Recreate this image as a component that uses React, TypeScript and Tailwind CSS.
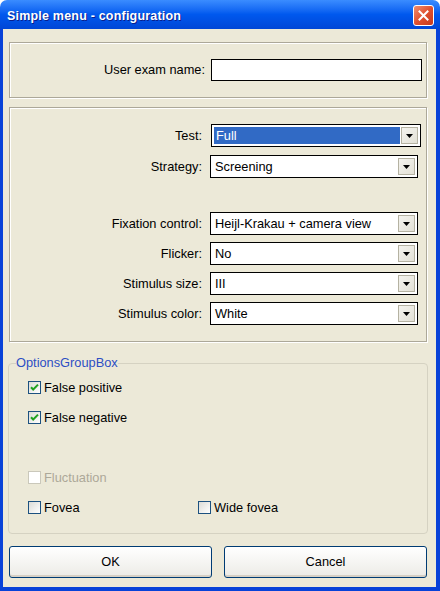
import React from "react";

const font = { fontFamily: '"Liberation Sans", Arial, sans-serif' };

function Combo({ value, selected, wide }: { value: string; selected?: boolean; wide?: boolean }) {
  return (
    <div
      className={`flex h-[23px] items-stretch border border-black bg-white p-[2px] ${
        wide ? "w-[210px]" : "w-[208px]"
      }`}
    >
      <div
        className={`flex flex-1 items-center pl-[2px] pt-[2px] text-[12.8px] leading-none ${
          selected ? "bg-[#316AC5] text-white" : "text-black"
        }`}
      >
        {value}
      </div>
      <div className="ml-[1px] flex w-[17px] items-center justify-center border border-[#B5B2A2] bg-gradient-to-br from-[#F4F3EE] to-[#E3E1D6]">
        <svg width="7" height="4" viewBox="0 0 7 4">
          <path d="M0 0h7L3.5 4z" fill="#000" />
        </svg>
      </div>
    </div>
  );
}

function ComboRow({
  label,
  value,
  selected,
  wide,
  className = "",
}: {
  label: string;
  value: string;
  selected?: boolean;
  wide?: boolean;
  className?: string;
}) {
  return (
    <div className={`flex items-center ${className}`}>
      <div className="w-[194px] pr-[2px] text-right text-[12.8px] text-black">{label}</div>
      <div className={wide ? "ml-[7px]" : "ml-[6px]"}>
        <Combo value={value} selected={selected} wide={wide} />
      </div>
    </div>
  );
}

function Check({
  label,
  checked,
  disabled,
}: {
  label: string;
  checked?: boolean;
  disabled?: boolean;
}) {
  return (
    <div className="flex h-[13px] items-center">
      <div
        className={`flex h-[13px] w-[13px] items-center justify-center border ${
          disabled
            ? "border-[#CAC8BB] bg-white"
            : "border-[#1C5180] bg-gradient-to-br from-[#DCDCD7] to-white"
        }`}
      >
        {checked && (
          <svg width="9" height="9" viewBox="0 0 9 9">
            <path d="M1 4.2l2.2 2.3L8 1.6" stroke="#21A121" strokeWidth="2" fill="none" />
          </svg>
        )}
      </div>
      <span className={`ml-[3px] text-[12.8px] ${disabled ? "text-[#ACA899]" : "text-black"}`}>
        {label}
      </span>
    </div>
  );
}

export default function App() {
  return (
    <div className="flex h-[591px] w-[440px] flex-col bg-white" style={font}>
      {/* Title bar */}
      <div className="flex h-[29px] items-center justify-between rounded-t-[7px] bg-gradient-to-b from-[#3A8CFF] via-[#0058EE] to-[#0046D6] pl-[7px] pr-[6px]">
        <span className="pt-[3px] text-[12.5px] font-bold tracking-[0.2px] text-white [text-shadow:1px_1px_0_#0A1E8C]">
          Simple menu - configuration
        </span>
        <div className="mt-[2px] flex h-[21px] w-[21px] items-center justify-center rounded-[3px] border border-white bg-gradient-to-br from-[#F08D6E] via-[#E0502F] to-[#C5391C]">
          <svg width="11" height="11" viewBox="0 0 11 11">
            <path d="M1.5 1.5l8 8M9.5 1.5l-8 8" stroke="#fff" strokeWidth="2" strokeLinecap="square" />
          </svg>
        </div>
      </div>

      {/* Client area */}
      <div className="flex flex-1 flex-col border-b-[4px] border-l-[3px] border-r-[4px] border-[#0842D8] bg-[#ECE9D8] pl-[6px] pr-[9px] pt-[13px]">
        {/* Exam name panel */}
        <div className="flex h-[56px] items-center border border-[#ACA899] shadow-[1px_1px_0_#fff,inset_1px_1px_0_#fff]">
          <div className="w-[197px] pr-[2px] text-right text-[12.8px] text-black">User exam name:</div>
          <input
            className="ml-[4px] h-[22px] w-[211px] border border-black bg-white outline-none"
            defaultValue=""
          />
        </div>

        {/* Settings panel */}
        <div className="mt-[9px] flex h-[235px] flex-col border border-[#ACA899] pt-[16px] shadow-[1px_1px_0_#fff,inset_1px_1px_0_#fff]">
          <ComboRow label="Test:" value="Full" selected wide />
          <ComboRow label="Strategy:" value="Screening" className="mt-[8px]" />
          <ComboRow label="Fixation control:" value="Heijl-Krakau + camera view" className="mt-[34px]" />
          <ComboRow label="Flicker:" value="No" className="mt-[7px]" />
          <ComboRow label="Stimulus size:" value="III" className="mt-[7px]" />
          <ComboRow label="Stimulus color:" value="White" className="mt-[7px]" />
        </div>

        {/* Options group box */}
        <fieldset className="ml-[-1px] mt-[14px] h-[178px] w-[420px] rounded-[4px] border border-[#D5D2C2] p-0">
          <legend className="ml-[7px] p-0 text-[12.8px] leading-[14px] text-[#2C4FC4]">OptionsGroupBox</legend>
          <div className="mt-[11px] flex flex-col pl-[19px]">
            <Check label="False positive" checked />
            <div className="mt-[17px]">
              <Check label="False negative" checked />
            </div>
            <div className="mt-[47px]">
              <Check label="Fluctuation" disabled />
            </div>
            <div className="mt-[17px] flex">
              <div className="w-[170px]">
                <Check label="Fovea" />
              </div>
              <Check label="Wide fovea" />
            </div>
          </div>
        </fieldset>

        {/* Buttons */}
        <div className="mt-[12px] flex gap-[12px]">
          <button className="h-[32px] w-[203px] rounded-[3px] border border-[#003C74] bg-gradient-to-b from-white to-[#ECEBE6] text-[12.8px] text-black shadow-[inset_0_-2px_0_#D6D0C5]">
            OK
          </button>
          <button className="h-[32px] w-[203px] rounded-[3px] border border-[#003C74] bg-gradient-to-b from-white to-[#ECEBE6] text-[12.8px] text-black shadow-[inset_0_-2px_0_#D6D0C5]">
            Cancel
          </button>
        </div>
      </div>
    </div>
  );
}
